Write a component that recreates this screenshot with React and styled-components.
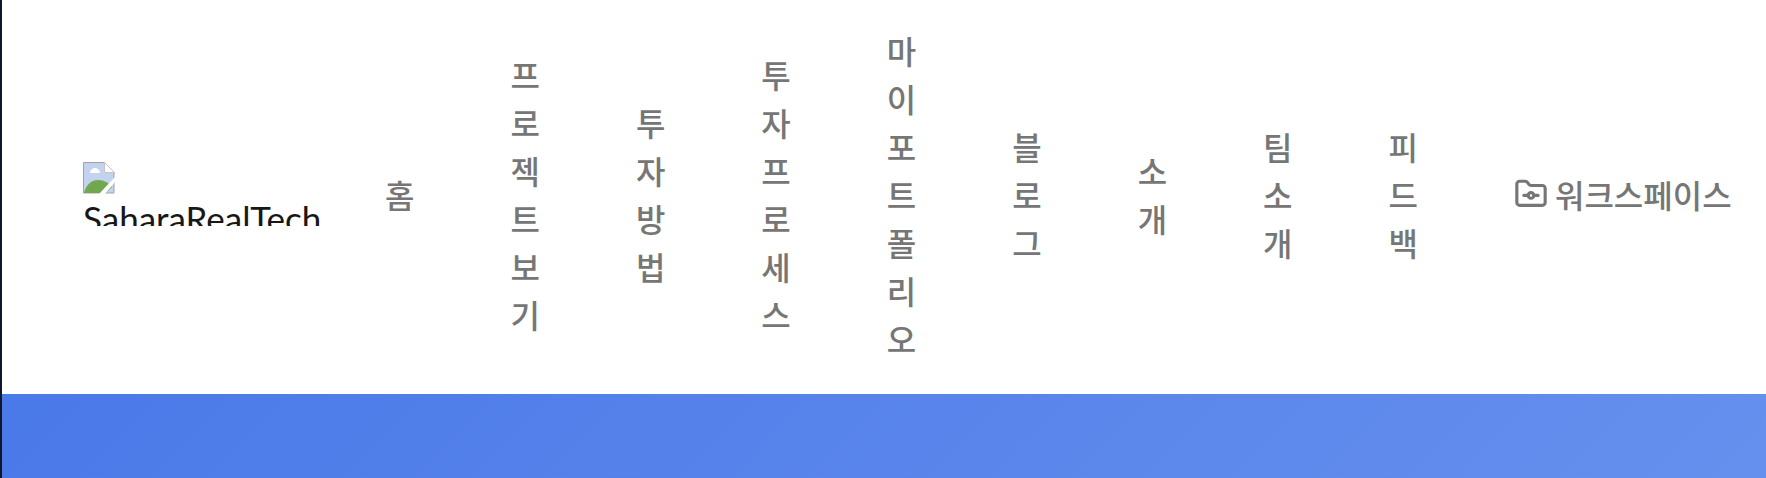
import React from 'react';
import styled, { createGlobalStyle } from 'styled-components';
import { FolderGit } from 'lucide-react';

const GlobalStyle = createGlobalStyle`
  html, body {
    margin: 0;
    padding: 0;
    height: 100%;
    overflow: hidden;
    background: #fff;
  }
  #root {
    height: 100%;
  }
`;

const Page = styled.div`
  display: flex;
  flex-direction: column;
  height: 100vh;
  border-left: 2px solid #0f172a;
  box-sizing: border-box;
  font-family: "Noto Sans CJK KR", "Noto Sans", sans-serif;
`;

const Header = styled.header`
  display: flex;
  align-items: center;
  box-sizing: border-box;
  height: 394px;
  flex-shrink: 0;
  padding: 0 0 6px 81px;
  background: #fff;
`;

const Logo = styled.a`
  display: block;
  width: 254px;
  height: 64px;
  overflow: hidden;
  font-family: Lato, "Liberation Sans", sans-serif;
  font-size: 35px;
  line-height: 48px;
  color: #171717;
`;

const BrokenIcon = styled.svg`
  display: block;
  width: 32px;
  height: 32px;
`;

const Nav = styled.nav`
  display: flex;
  align-items: center;
`;

const NavItem = styled.a`
  display: block;
  width: 29.44px;
  padding: 0 48px;
  font-size: 32px;
  font-weight: 500;
  line-height: 48px;
  color: #767676;
  word-break: break-all;
  text-align: center;
`;

const Workspace = styled.a`
  display: flex;
  align-items: center;
  gap: 7px;
  margin-left: 48px;
  font-size: 32px;
  font-weight: 500;
  line-height: 48px;
  color: #767676;
  white-space: nowrap;
`;

const Hero = styled.section`
  flex: 1;
  background: linear-gradient(135deg, #4a79e8, #6690ee);
`;

const items = ['홈', '프로젝트보기', '투자방법', '투자프로세스', '마이포트폴리오', '블로그', '소개', '팀소개', '피드백'];

function BrokenImage() {
  return (
    <BrokenIcon viewBox="0 0 32 32">
      <path d="M.5.5h21l9.500 9.500v21H.5z" fill="#c3d2ee" stroke="#a3a3a3" />
      <path d="M21.500.5v10h10z" fill="#fff" stroke="#c4c4c4" />
      <path d="M1 31c2-9 8-13 14-13s11 3 14 7l-6 6z" fill="#6fa84f" />
      <path d="M7 11c0-3 3-5 5-5s5 2 5 5z" fill="#fff" />
      <path d="M16 32L32 15v5L22 32z" fill="#fff" />
    </BrokenIcon>
  );
}

export default function App() {
  return (
    <Page>
      <GlobalStyle />
      <Header>
        <Logo>
          <BrokenImage />
          SaharaRealTech
        </Logo>
        <Nav>
          {items.map((item) => (
            <NavItem key={item}>{item}</NavItem>
          ))}
        </Nav>
        <Workspace>
          <FolderGit size={34} strokeWidth={2.2} />
          워크스페이스
        </Workspace>
      </Header>
      <Hero />
    </Page>
  );
}
